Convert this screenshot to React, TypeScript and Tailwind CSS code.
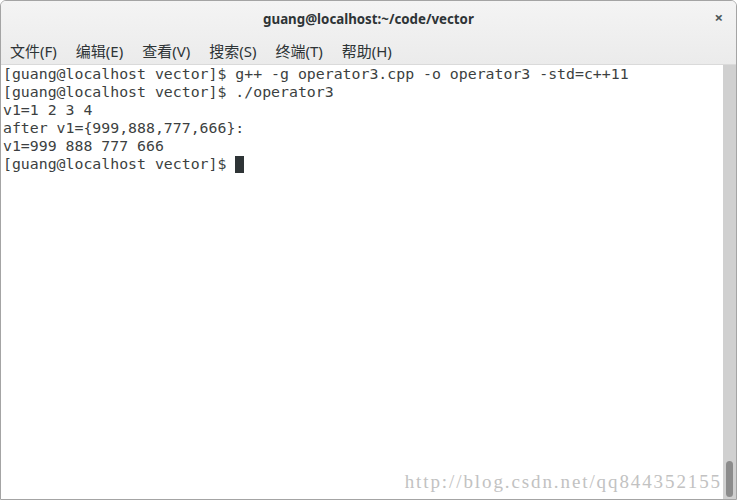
import React from 'react';

const lines = [
  '[guang@localhost vector]$ g++ -g operator3.cpp -o operator3 -std=c++11',
  '[guang@localhost vector]$ ./operator3',
  'v1=1 2 3 4',
  'after v1={999,888,777,666}:',
  'v1=999 888 777 666',
];

const menus = ['文件(F)', '编辑(E)', '查看(V)', '搜索(S)', '终端(T)', '帮助(H)'];

export default function App() {
  return (
    <div className="w-[737px] h-[500px] bg-white">
      <div className="relative w-full h-full flex flex-col border border-[#a4a4a4] rounded-t-[6px] overflow-hidden">
        {/* title + menu */}
        <div className="bg-gradient-to-b from-[#f4f4f4] to-[#ebebeb] border-b border-[#dadada]">
          <div className="h-[37px] flex items-center justify-center relative">
            <span
              className="text-[13.3px] font-bold text-[#2e3436]"
              style={{ fontFamily: '"Noto Sans", "DejaVu Sans", sans-serif' }}
            >
              guang@localhost:~/code/vector
            </span>
            <span className="absolute right-[13px] top-[9px] text-[15px] font-bold text-[#4b555a] leading-none">
              ×
            </span>
          </div>
          <div
            className="h-[26px] flex items-center gap-[19px] pl-[9px] text-[15px] text-[#2e3436]"
            style={{ fontFamily: '"Noto Sans", "Noto Sans CJK SC", sans-serif' }}
          >
            {menus.map((m) => (
              <span key={m}>{m}</span>
            ))}
          </div>
        </div>

        {/* terminal */}
        <div className="flex-1 flex">
          <div
            className="flex-1 pl-[2px] text-[14.85px] leading-[18px] text-[#3c3f41] whitespace-pre"
            style={{ fontFamily: '"DejaVu Sans Mono", monospace' }}
          >
            {lines.map((l, i) => (
              <div key={i}>{l}</div>
            ))}
            <div className="flex items-center">
              <span>[guang@localhost vector]$ </span>
              <span className="inline-block w-[9px] h-[17px] bg-[#2e3436]" />
            </div>
          </div>
          <div className="w-[13px] bg-[#d0d0d0] flex flex-col justify-end items-center pb-[2px]">
            <div className="w-[7px] h-[36px] rounded-full bg-[#8c8c8c]" />
          </div>
        </div>

        <span
          className="absolute right-[14px] bottom-[8px] text-[19px] tracking-[1.9px] text-[#c2c2c2] leading-none"
          style={{ fontFamily: '"Liberation Serif", serif' }}
        >
          http://blog.csdn.net/qq844352155
        </span>
      </div>
    </div>
  );
}
